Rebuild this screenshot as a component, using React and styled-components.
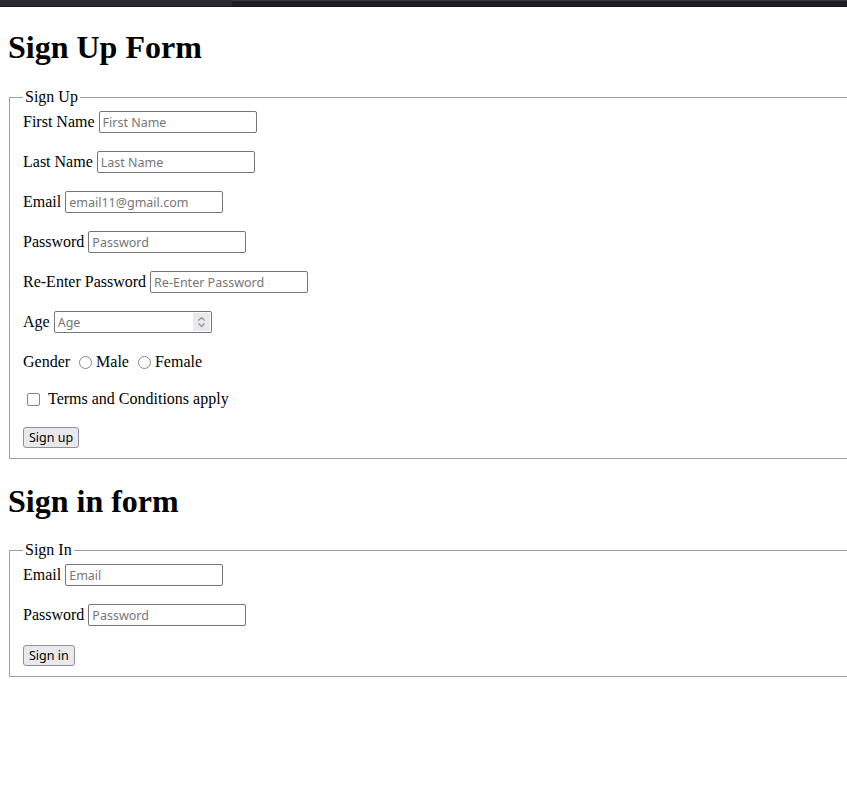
import React from 'react'
import styled, { createGlobalStyle } from 'styled-components'

const GlobalStyle = createGlobalStyle`
  html, body {
    margin: 0;
    padding: 0;
    background: #fff;
    overflow-x: hidden;
  }
  body {
    font-family: "Liberation Serif", "Times New Roman", serif;
    font-size: 16px;
    color: #000;
  }
`

const TopBar = styled.div`
  height: 7px;
  display: flex;
  background: #2b2a33;
  border-bottom: 1px solid #17161c;
  box-sizing: border-box;
`
const TabStrip = styled.div`
  width: 232px;
  background: #2b2a33;
`
const TabRest = styled.div`
  flex: 1;
  background: #1f1e25;
  border-top: 1px solid #3a3944;
`

const Page = styled.div`
  padding: 0 8px;
  display: flow-root;
`

const Title = styled.h1`
  font-size: 32px;
  font-weight: bold;
  margin: ${p => p.$top ?? 22}px 0 ${p => p.$bottom ?? 21}px;
  line-height: 37px;
`

const FieldSet = styled.fieldset`
  margin: 0 -40px 0 1px;
  padding: 5px 12px 10px 13px;
  border: 1px solid #a0a0a0;
  border-right: none;
`
const Legend = styled.legend`
  padding: 0 2px;
  margin-left: 0;
  line-height: 18px;
`

const Row = styled.div`
  display: flex;
  align-items: center;
  gap: 4px;
  min-height: 22px;
  margin-bottom: ${p => p.$gap ?? 18}px;
`

const Label = styled.label`
  white-space: nowrap;
`

const TextInput = styled.input`
  box-sizing: border-box;
  width: 158px;
  height: 22px;
  padding: 1px 3px;
  border: 1px solid #767676;
  border-radius: 2px;
  font-family: "Noto Sans", "Open Sans", sans-serif;
  font-size: 12.5px;
  &::placeholder {
    color: #767676;
  }
`

const NumberBox = styled.div`
  box-sizing: border-box;
  width: 158px;
  height: 22px;
  display: flex;
  align-items: stretch;
  border: 1px solid #767676;
  border-radius: 2px;
  padding: 1px;
`
const NumberInput = styled.input`
  flex: 1;
  min-width: 0;
  border: none;
  outline: none;
  padding: 0 2px;
  font-family: "Noto Sans", "Open Sans", sans-serif;
  font-size: 12.5px;
  &::placeholder {
    color: #767676;
  }
`
const Spinner = styled.div`
  width: 17px;
  background: #e9e9ed;
  display: flex;
  align-items: center;
  justify-content: center;
`

const Choice = styled.label`
  display: flex;
  align-items: center;
  margin-left: ${p => p.$indent ?? 5}px;
`
const Radio = styled.input`
  appearance: none;
  box-sizing: border-box;
  width: 13px;
  height: 13px;
  margin: 0 4px 0 0;
  border: 1.5px solid #858585;
  border-radius: 50%;
  background: #fff;
`
const Check = styled.input`
  appearance: none;
  box-sizing: border-box;
  width: 13px;
  height: 13px;
  margin: 0 8px 0 0;
  border: 1.5px solid #858585;
  border-radius: 2px;
  background: #fff;
`

const Button = styled.button`
  font-family: "Noto Sans", "Open Sans", sans-serif;
  font-size: 12.5px;
  height: 21px;
  padding: 0 5px;
  background: #e9e9ed;
  border: 1px solid #8f8f9d;
  border-radius: 3px;
  color: #000;
`

const Field = ({ label, placeholder, type = 'text' }) => (
  <Row>
    <Label>{label}</Label>
    <TextInput type={type} placeholder={placeholder} />
  </Row>
)

const App = () => (
  <>
    <GlobalStyle />
    <TopBar>
      <TabStrip />
      <TabRest />
    </TopBar>
    <Page>
      <Title $bottom={22}>Sign Up Form</Title>
      <FieldSet>
        <Legend>Sign Up</Legend>
        <Field label="First Name" placeholder="First Name" />
        <Field label="Last Name" placeholder="Last Name" />
        <Field label="Email" placeholder="email11@gmail.com" type="email" />
        <Field label="Password" placeholder="Password" type="password" />
        <Field label="Re-Enter Password" placeholder="Re-Enter Password" type="password" />
        <Row>
          <Label>Age</Label>
          <NumberBox>
            <NumberInput type="text" placeholder="Age" />
            <Spinner>
              <svg width="9" height="12" viewBox="0 0 9 12" fill="none" stroke="#8a8a8a" strokeWidth="1.1">
                <path d="M1.5 4.5 L4.5 1.5 L7.5 4.5" />
                <path d="M1.5 7.5 L4.5 10.5 L7.5 7.5" />
              </svg>
            </Spinner>
          </NumberBox>
        </Row>
        <Row $gap={15}>
          <Label>Gender</Label>
          <Choice><Radio type="radio" name="g" />Male</Choice>
          <Choice><Radio type="radio" name="g" />Female</Choice>
        </Row>
        <Row $gap={16}>
          <Choice $indent={4}><Check type="checkbox" />Terms and Conditions apply</Choice>
        </Row>
        <Row $gap={0}>
          <Button>Sign up</Button>
        </Row>
      </FieldSet>
      <Title $top={24}>Sign in form</Title>
      <FieldSet>
        <Legend>Sign In</Legend>
        <Field label="Email" placeholder="Email" type="email" />
        <Field label="Password" placeholder="Password" type="password" />
        <Row $gap={0}>
          <Button>Sign in</Button>
        </Row>
      </FieldSet>
    </Page>
  </>
)

export default App
